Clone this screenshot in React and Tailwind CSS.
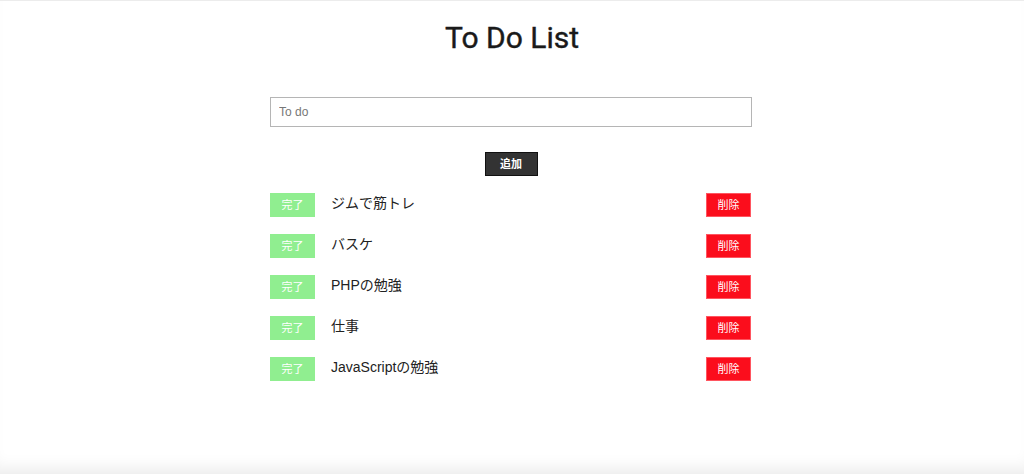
import React, { useState } from 'react';

const initialTodos = ['ジムで筋トレ', 'バスケ', 'PHPの勉強', '仕事', 'JavaScriptの勉強'];

export default function App() {
  const [todos, setTodos] = useState(initialTodos);
  const [text, setText] = useState('');

  const addTodo = () => {
    if (!text.trim()) return;
    setTodos(prev => [...prev, text.trim()]);
    setText('');
  };

  const removeTodo = (index) => {
    setTodos(prev => prev.filter((_, i) => i !== index));
  };

  return (
    <div
      className="h-[474px] bg-white overflow-hidden border-t border-[#ececec] shadow-[inset_0_-16px_18px_-12px_rgba(0,0,0,0.09)]"
      style={{ fontFamily: '"Liberation Sans", "Noto Sans CJK JP", sans-serif' }}
    >
      {/* Header */}
      <h1 className="pt-[15px] text-center text-[30px] leading-[44px] font-normal text-[#1a1a1a] font-['Roboto',sans-serif] [-webkit-text-stroke:0.4px_#1a1a1a]">
        To Do List
      </h1>

      <div className="mx-auto w-[484px] pr-[2px] mt-[37px]">
        {/* Input */}
        <input
          type="text"
          value={text}
          onChange={e => setText(e.target.value)}
          placeholder="To do"
          className="block w-full h-[30px] border border-[#b5b5b5] px-2 text-[12px] text-[#333] placeholder:text-[#777] outline-none"
        />

        {/* Add button */}
        <div className="flex justify-center mt-[25px]">
          <button
            onClick={addTodo}
            className="w-[53px] h-[24px] bg-[#333] border border-[#111] text-white text-[11px] font-bold"
          >
            追加
          </button>
        </div>

        {/* List */}
        <ul className="mt-[17px] flex flex-col gap-[17px]">
          {todos.map((todo, i) => (
            <li key={i} className="flex items-start h-[24px]">
              <button className="w-[45px] h-[24px] bg-[#90ee90] text-white text-[11px]">完了</button>
              <span className="ml-4 flex-1 text-[14px] leading-[20px] text-[#222]">{todo}</span>
              <button
                onClick={() => removeTodo(i)}
                className="mr-px w-[45px] h-[24px] bg-[#fb0d1c] border border-[#ff5560] text-white text-[11px]"
              >
                削除
              </button>
            </li>
          ))}
        </ul>
      </div>
    </div>
  );
}
